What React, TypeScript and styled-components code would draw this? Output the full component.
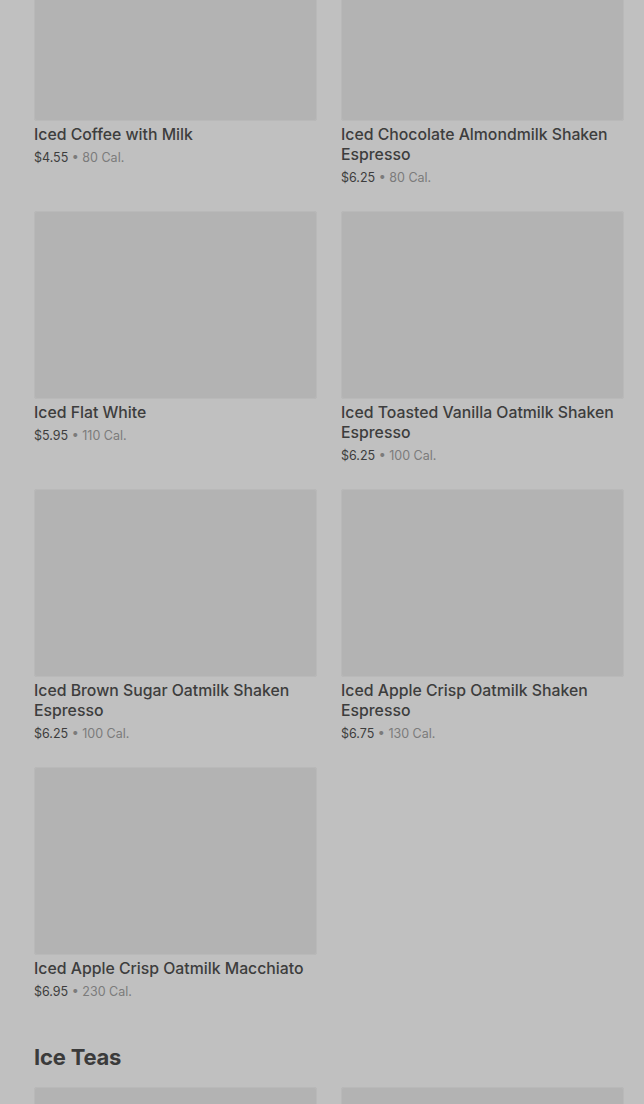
import React from "react";
import styled, { createGlobalStyle } from "styled-components";

const Global = createGlobalStyle`
  html, body { margin: 0; padding: 0; background: #c0c0c0; }
  body { font-family: Inter, "Noto Sans", Roboto, sans-serif; overflow: hidden; }
`;

const Page = styled.main`
  padding: 0 20px 0 34px;
  margin-top: -67px;
`;

const Section = styled.section`
  display: flex;
  flex-direction: column;
`;

const Heading = styled.h2`
  margin: 39px 0 14px;
  font-size: 22px;
  line-height: 32px;
  font-weight: 700;
  color: #3b3b3b;
  letter-spacing: -0.2px;
`;

const Grid = styled.div`
  display: grid;
  grid-template-columns: 283px 283px;
  column-gap: 24px;
  row-gap: 23px;
`;

const Card = styled.article`
  display: flex;
  flex-direction: column;
`;

const Thumb = styled.div<{ $h?: number }>`
  height: ${(p) => p.$h ?? 188}px;
  background: #b3b3b3;
  border-radius: 3px;
  box-shadow: inset 0 0 0 1px #b9b9b9;
`;

const Title = styled.h3`
  margin: 4px 0 0;
  font-size: 15.8px;
  line-height: 20px;
  font-weight: 500;
  color: #3d3d3d;
`;

const Meta = styled.p`
  margin: 3px 0 0;
  font-size: 12.5px;
  line-height: 20px;
  color: #3d3d3d;
`;

const Cal = styled.span`
  color: #7b7b7b;
`;

type Item = { name: string; price: string; cal: string };

const coffees: Item[] = [
  { name: "Iced Coffee with Milk", price: "$4.55", cal: "80 Cal." },
  { name: "Iced Chocolate Almondmilk Shaken Espresso", price: "$6.25", cal: "80 Cal." },
  { name: "Iced Flat White", price: "$5.95", cal: "110 Cal." },
  { name: "Iced Toasted Vanilla Oatmilk Shaken Espresso", price: "$6.25", cal: "100 Cal." },
  { name: "Iced Brown Sugar Oatmilk Shaken Espresso", price: "$6.25", cal: "100 Cal." },
  { name: "Iced Apple Crisp Oatmilk Shaken Espresso", price: "$6.75", cal: "130 Cal." },
  { name: "Iced Apple Crisp Oatmilk Macchiato", price: "$6.95", cal: "230 Cal." },
];

const ProductCard = ({ item }: { item: Item }) => (
  <Card>
    <Thumb />
    <Title>{item.name}</Title>
    <Meta>
      {item.price} <Cal>• {item.cal}</Cal>
    </Meta>
  </Card>
);

export default function App() {
  return (
    <>
      <Global />
      <Page>
        <Section>
          <Grid>
            {coffees.map((c) => (
              <ProductCard key={c.name} item={c} />
            ))}
          </Grid>
        </Section>
        <Section>
          <Heading>Ice Teas</Heading>
          <Grid>
            <Card>
              <Thumb />
            </Card>
            <Card>
              <Thumb />
            </Card>
          </Grid>
        </Section>
      </Page>
    </>
  );
}
